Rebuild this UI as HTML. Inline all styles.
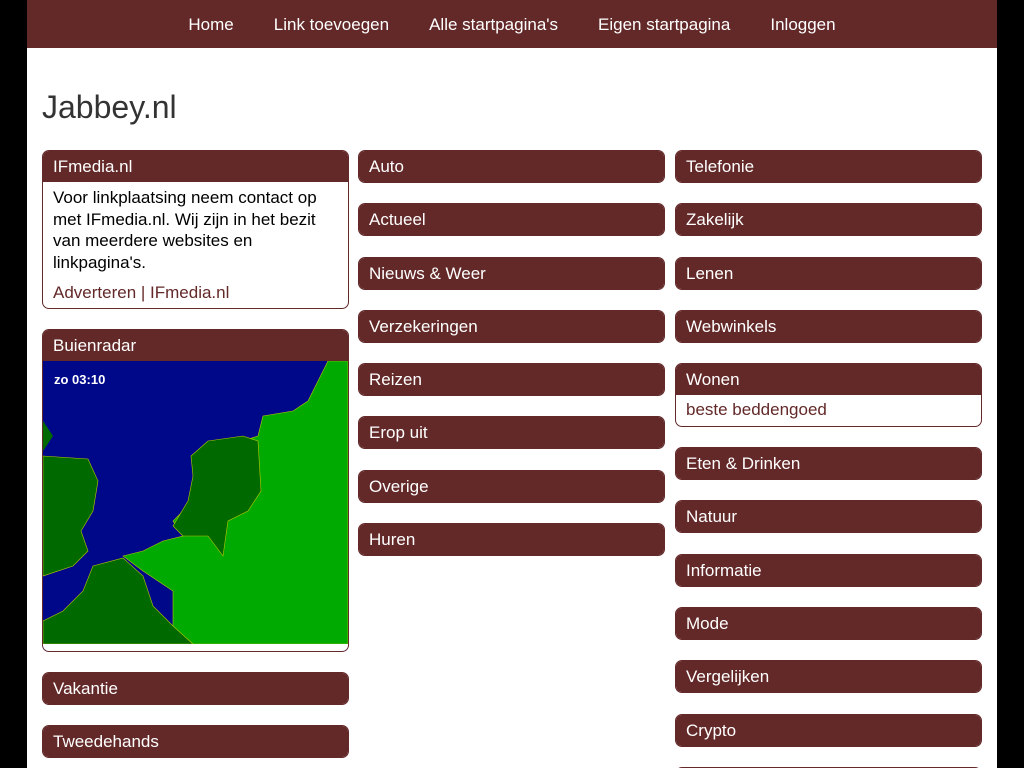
<!DOCTYPE html>
<html style="width:1024px;height:768px;overflow:hidden"><head><meta charset="utf-8"><style>
*{box-sizing:border-box;margin:0;padding:0}
body{background:#000;font-family:"Liberation Sans",sans-serif;width:1024px;height:768px;overflow:hidden;position:relative}
.wrap{position:absolute;left:27px;top:0;width:970px;height:768px;background:#fff;overflow:hidden}
.nav{height:48px;background:#632828;display:flex;justify-content:center;gap:0}
.nav a{color:#fff;text-decoration:none;font-size:17px;line-height:49px;padding:0 20px}
h1{position:absolute;left:15px;top:89px;font-size:32px;font-weight:normal;color:#333}
.col{position:absolute;top:150px;width:307px}
.box{border:1px solid #632828;border-radius:7px;margin-bottom:20.3px;overflow:hidden}
.hd{background:#632828;color:#fff;font-size:17px;height:31px;line-height:31px;padding-left:10px}
.bd{padding:5px 10px 4px 10px;font-size:17px;line-height:21.7px;color:#000}
.bd a{color:#632828;text-decoration:none}
</style></head><body><div class="wrap">
<div class="nav"><a>Home</a><a>Link toevoegen</a><a>Alle startpagina's</a><a>Eigen startpagina</a><a>Inloggen</a></div>
<h1>Jabbey.nl</h1>
<div class="col" style="left:15px">
<div class="box"><div class="hd">IFmedia.nl</div><div class="bd">Voor linkplaatsing neem contact op met IFmedia.nl. Wij zijn in het bezit van meerdere websites en linkpagina's.<div style="margin-top:8px"><a>Adverteren | IFmedia.nl</a></div></div></div>
<div class="box"><div class="hd">Buienradar</div>
<svg width="305" height="290" viewBox="0 0 305 290" style="display:block">
<rect width="305" height="290" fill="#00088a"/>
<polygon points="80,195 100,190 120,180 140,175 130,160 150,140 170,115 185,85 215,75 220,55 250,50 265,40 275,20 285,0 305,0 305,283 130,283 130,230 100,210" fill="#00aa00" stroke="#b8c800" stroke-width="0.6"/>
<polygon points="140,175 130,165 145,140 150,115 148,95 165,80 200,75 215,80 218,130 205,150 185,160 180,195 165,175" fill="#006a00" stroke="#b8c800" stroke-width="0.6"/>
<polygon points="0,283 0,260 20,250 40,230 50,205 80,197 100,215 110,245 130,265 150,283" fill="#006a00" stroke="#b8c800" stroke-width="0.6"/>
<polygon points="0,95 45,98 55,120 50,150 38,170 45,190 30,205 0,215" fill="#006a00" stroke="#b8c800" stroke-width="0.6"/>
<polygon points="0,60 10,75 0,90" fill="#006a00"/>
<rect y="283" width="305" height="7" fill="#fff"/>
<text x="11" y="23" fill="#fff" font-size="13" font-weight="bold" font-family="Liberation Sans,sans-serif">zo 03:10</text>
</svg></div>
<div class="box"><div class="hd">Vakantie</div></div>
<div class="box"><div class="hd">Tweedehands</div></div>
</div>
<div class="col" style="left:331px">
<div class="box"><div class="hd">Auto</div></div>
<div class="box"><div class="hd">Actueel</div></div>
<div class="box"><div class="hd">Nieuws &amp; Weer</div></div>
<div class="box"><div class="hd">Verzekeringen</div></div>
<div class="box"><div class="hd">Reizen</div></div>
<div class="box"><div class="hd">Erop uit</div></div>
<div class="box"><div class="hd">Overige</div></div>
<div class="box"><div class="hd">Huren</div></div>
</div>
<div class="col" style="left:648px">
<div class="box"><div class="hd">Telefonie</div></div>
<div class="box"><div class="hd">Zakelijk</div></div>
<div class="box"><div class="hd">Lenen</div></div>
<div class="box"><div class="hd">Webwinkels</div></div>
<div class="box"><div class="hd">Wonen</div><div class="bd" style="padding:4px 10px 5px"><a>beste beddengoed</a></div></div>
<div class="box"><div class="hd">Eten &amp; Drinken</div></div>
<div class="box"><div class="hd">Natuur</div></div>
<div class="box"><div class="hd">Informatie</div></div>
<div class="box"><div class="hd">Mode</div></div>
<div class="box"><div class="hd">Vergelijken</div></div>
<div class="box"><div class="hd">Crypto</div></div>
<div class="box"><div class="hd">&nbsp;</div></div>
</div>
</div></body></html>
